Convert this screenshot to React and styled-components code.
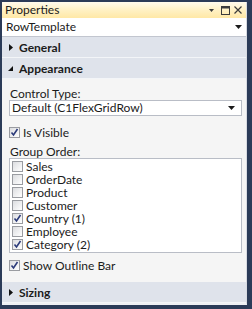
import styled, { createGlobalStyle } from 'styled-components';

const GlobalStyle = createGlobalStyle`
  html, body { margin: 0; padding: 0; }
  body {
    width: 252px;
    height: 309px;
    overflow: hidden;
    font-family: "Lato", "Noto Sans", sans-serif;
    font-size: 12px;
    color: #1b1b1b;
  }
`;

const Frame = styled.div`
  box-sizing: border-box;
  width: 252px;
  height: 309px;
  background: #2b3b58;
  padding: 2px 5px 4px 2px;
`;

const Panel = styled.div`
  height: 100%;
  display: flex;
  flex-direction: column;
  background: #f5f5f5;
  border-right: 1px solid #d8dbe2;
  border-bottom: 2px solid #eef0f4;
  box-sizing: border-box;
`;

const TitleBar = styled.div`
  height: 16px;
  flex-shrink: 0;
  display: flex;
  align-items: center;
  padding: 0 4px 0 3px;
  background: linear-gradient(#fffbee, #fff2c8 45%, #ffe8a6);
`;

const Title = styled.span`
  flex: 1;
  line-height: 16px;
`;

const TitleButtons = styled.div`
  display: flex;
  align-items: center;
  gap: 4px;
`;

const ObjectCombo = styled.div`
  height: 18px;
  flex-shrink: 0;
  display: flex;
  align-items: center;
  padding: 0 4px;
  background: #ffffff;
  border-bottom: 1px solid #c2c6cf;
`;

const ComboText = styled.span`
  flex: 1;
  line-height: 14px;
`;

const SectionHeader = styled.div`
  height: 20px;
  flex-shrink: 0;
  display: flex;
  align-items: center;
  gap: 6px;
  padding-left: 6px;
  background: #dfe3eb;
  border-bottom: 1px solid #f3f5f8;
  font-weight: 700;
`;

const Arrow = styled.span`
  width: 5px;
  display: flex;
  justify-content: center;
`;

const SectionBody = styled.div`
  flex: 1;
  display: flex;
  flex-direction: column;
  padding: 8px 4px 0 7px;
`;

const FieldLabel = styled.div`
  line-height: 13px;
  padding-left: 1px;
  margin-top: ${({ $top }) => $top}px;
`;

const Select = styled.div`
  height: 14px;
  display: flex;
  align-items: center;
  padding: 0 6px 0 2px;
  background: #ffffff;
  border: 1px solid #b9bdc6;
`;

const CheckRow = styled.label`
  display: flex;
  align-items: center;
  gap: 3px;
  height: 13px;
  line-height: 13px;
  margin-top: ${({ $top }) => $top}px;
`;

const Box = styled.span`
  box-sizing: border-box;
  width: 11px;
  height: 11px;
  flex-shrink: 0;
  border: 1px solid #9a9ca1;
  background: linear-gradient(135deg, #dcdde0, #ffffff);
  display: flex;
  align-items: center;
  justify-content: center;
`;

const ListBox = styled.div`
  height: 92px;
  padding: 1px 0 0 2px;
  background: #ffffff;
  border: 1px solid #b9bdc6;
  display: flex;
  flex-direction: column;
`;

const Check = ({ on }) => (
  <Box>
    {on && (
      <svg width="9" height="9" viewBox="0 0 9 9">
        <path d="M1.5 4.5 L3.5 7 L7.5 1" fill="none" stroke="#2c3b7a" strokeWidth="1.6" />
      </svg>
    )}
  </Box>
);

const DownArrow = () => (
  <svg width="7" height="4" viewBox="0 0 7 4">
    <path d="M0 0 H7 L3.5 4 Z" fill="#1b1b1b" />
  </svg>
);

const RightArrow = () => (
  <svg width="4" height="7" viewBox="0 0 4 7">
    <path d="M0 0 L4 3.5 L0 7 Z" fill="#111" />
  </svg>
);

const groups = [
  ['Sales', false],
  ['OrderDate', false],
  ['Product', false],
  ['Customer', false],
  ['Country (1)', true],
  ['Employee', false],
  ['Category (2)', true],
];

export default function App() {
  return (
    <>
      <GlobalStyle />
      <Frame>
        <Panel>
          <TitleBar>
            <Title>Properties</Title>
            <TitleButtons>
              <svg width="5" height="3" viewBox="0 0 5 3" style={{ marginRight: 3 }}>
                <path d="M0 0 H5 L2.5 3 Z" fill="#3c3c3c" />
              </svg>
              <svg width="9" height="9" viewBox="0 0 9 9">
                <rect x="0.5" y="0.5" width="8" height="8" fill="none" stroke="#3c3c3c" />
                <rect x="0.5" y="1" width="8" height="1.5" fill="#3c3c3c" />
              </svg>
              <svg width="8" height="8" viewBox="0 0 8 8">
                <path d="M0.5 0.5 L7.5 7.5 M7.5 0.5 L0.5 7.5" stroke="#3c3c3c" strokeWidth="1.2" />
              </svg>
            </TitleButtons>
          </TitleBar>
          <ObjectCombo>
            <ComboText>RowTemplate</ComboText>
            <DownArrow />
          </ObjectCombo>
          <SectionHeader>
            <Arrow><RightArrow /></Arrow>
            General
          </SectionHeader>
          <SectionHeader>
            <Arrow>
              <svg width="5" height="5" viewBox="0 0 5 5">
                <path d="M5 0 V5 H0 Z" fill="#111" />
              </svg>
            </Arrow>
            Appearance
          </SectionHeader>
          <SectionBody>
            <FieldLabel $top={0}>Control Type:</FieldLabel>
            <Select>
              <ComboText>Default (C1FlexGridRow)</ComboText>
              <DownArrow />
            </Select>
            <CheckRow $top={10}>
              <Check on />
              Is Visible
            </CheckRow>
            <FieldLabel $top={6}>Group Order:</FieldLabel>
            <ListBox>
              {groups.map(([name, on]) => (
                <CheckRow key={name} $top={0}>
                  <Check on={on} />
                  {name}
                </CheckRow>
              ))}
            </ListBox>
            <CheckRow $top={6}>
              <Check on />
              Show Outline Bar
            </CheckRow>
          </SectionBody>
          <SectionHeader>
            <Arrow><RightArrow /></Arrow>
            Sizing
          </SectionHeader>
        </Panel>
      </Frame>
    </>
  );
}
